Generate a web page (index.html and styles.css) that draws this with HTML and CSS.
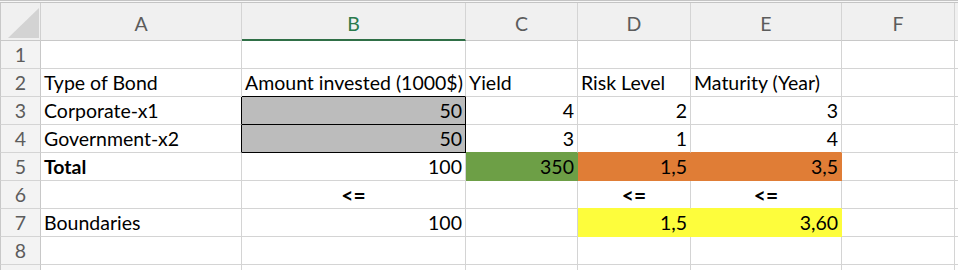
FILE: index.html
```html
<!DOCTYPE html>
<html lang="en">
<head>
<meta charset="utf-8">
<title>Bond portfolio</title>
<link rel="stylesheet" href="styles.css">
</head>
<body>
<div class="frame"></div>
<div class="sheet">
  <!-- column headers -->
  <div class="corner">
    <svg width="41" height="38" viewBox="0 0 41 38"><polygon points="7,35 38,35 38,5" fill="#d3d3d3"/></svg>
  </div>
  <div class="hd">A</div>
  <div class="hd sel">B</div>
  <div class="hd">C</div>
  <div class="hd">D</div>
  <div class="hd">E</div>
  <div class="hd">F</div>
  <div class="hd end"></div>

  <!-- row 1 -->
  <div class="rh">1</div>
  <div class="c"></div><div class="c"></div><div class="c"></div><div class="c"></div><div class="c"></div><div class="c"></div><div class="c end"></div>

  <!-- row 2 -->
  <div class="rh">2</div>
  <div class="c">Type of Bond</div>
  <div class="c box-top">Amount invested (1000$)</div>
  <div class="c">Yield</div>
  <div class="c">Risk Level</div>
  <div class="c">Maturity (Year)</div>
  <div class="c"></div><div class="c end"></div>

  <!-- row 3 -->
  <div class="rh">3</div>
  <div class="c box-left">Corporate-x1</div>
  <div class="c num input">50</div>
  <div class="c num">4</div>
  <div class="c num">2</div>
  <div class="c num">3</div>
  <div class="c"></div><div class="c end"></div>

  <!-- row 4 -->
  <div class="rh">4</div>
  <div class="c box-left">Government-x2</div>
  <div class="c num input">50</div>
  <div class="c num green-top">3</div>
  <div class="c num orange-top">1</div>
  <div class="c num orange-top">4</div>
  <div class="c"></div><div class="c end"></div>

  <!-- row 5 -->
  <div class="rh">5</div>
  <div class="c bold">Total</div>
  <div class="c num">100</div>
  <div class="c num fill-green">350</div>
  <div class="c num fill-orange">1,5</div>
  <div class="c num fill-orange">3,5</div>
  <div class="c"></div><div class="c end"></div>

  <!-- row 6 -->
  <div class="rh">6</div>
  <div class="c"></div>
  <div class="c ctr bold op">&lt;=</div>
  <div class="c"></div>
  <div class="c ctr bold op yellow-top">&lt;=</div>
  <div class="c ctr bold op yellow-top">&lt;=</div>
  <div class="c"></div><div class="c end"></div>

  <!-- row 7 -->
  <div class="rh">7</div>
  <div class="c">Boundaries</div>
  <div class="c num">100</div>
  <div class="c"></div>
  <div class="c num fill-yellow">1,5</div>
  <div class="c num fill-yellow">3,60</div>
  <div class="c"></div><div class="c end"></div>

  <!-- row 8 -->
  <div class="rh">8</div>
  <div class="c"></div><div class="c"></div><div class="c"></div><div class="c"></div><div class="c"></div><div class="c"></div><div class="c end"></div>

  <!-- row 9, only its top edge is in view -->
  <div class="rh"></div>
  <div class="c"></div><div class="c"></div><div class="c"></div><div class="c"></div><div class="c"></div><div class="c"></div><div class="c end"></div>
</div>
</body>
</html>
```

FILE: styles.css
```css
* { box-sizing: border-box; }

html, body {
  margin: 0;
  padding: 0;
  background: #ffffff;
  overflow: hidden;
}

body {
  width: 958px;
  height: 270px;
  font-family: "Lato", "Liberation Sans", sans-serif;
  font-size: 19.5px;
  color: #000;
}

/* window edge above the column headers */
.frame {
  height: 3px;
  border-top: 1px solid #c4c4c4;
  border-bottom: 1px solid #c4c4c4;
  background: #f7f7f7;
}

.sheet {
  display: grid;
  grid-template-columns: 41px 201px 224px 112px 113px 151px 113px 1fr;
  grid-template-rows: 38px repeat(8, 28px) 6px;
  overflow: hidden;
}

/* headers */
.corner {
  background: #f0f0f0;
  border-left: 1px solid #c8c8c8;
  border-right: 1px solid #d0d0d0;
  border-bottom: 1px solid #c8c8c8;
}
.corner svg { display: block; }

.hd {
  background: #f0f0f0;
  color: #5c5c5c;
  border-right: 1px solid #d4d4d4;
  border-bottom: 1px solid #c8c8c8;
  display: flex;
  align-items: flex-end;
  justify-content: center;
  padding-bottom: 6px;
  line-height: 20px;
}
.hd.sel {
  color: #2a7a4c;
  border-bottom: 2px solid #2f6f46;
  padding-bottom: 5px;
}
.hd.end { border-right: none; }

.rh {
  background: #f3f3f3;
  color: #5c5c5c;
  border-left: 1px solid #c8c8c8;
  border-right: 1px solid #c8c8c8;
  border-bottom: 1px solid #d4d4d4;
  display: flex;
  align-items: flex-end;
  justify-content: center;
  padding-bottom: 2px;
  line-height: 22px;
}

/* cells */
.c {
  border-right: 1px solid #d4d4d4;
  border-bottom: 1px solid #d4d4d4;
  display: flex;
  align-items: flex-end;
  padding: 0 3px 2px 3px;
  line-height: 22px;
  white-space: nowrap;
}
.c.end { border-right: none; }

.num { justify-content: flex-end; }
.ctr { justify-content: center; }
.bold { font-weight: 700; }
.op { font-size: 21px; }

/* input range B3:B4 */
.input {
  background: #bcbcbc;
  border-right-color: #000;
  border-bottom-color: #000;
}
.box-top { border-bottom-color: #000; }
.box-left { border-right-color: #000; }

/* result fills */
.fill-green {
  background: #6d9f46;
  border-right-color: #6d9f46;
  border-bottom-color: #6d9f46;
}
.fill-orange {
  background: #e07d36;
  border-right-color: #e07d36;
  border-bottom-color: #e07d36;
}
.fill-yellow {
  background: #fdfd3c;
  border-right-color: #fdfd3c;
  border-bottom-color: #fdfd3c;
}
.green-top { border-bottom-color: #6d9f46; }
.orange-top { border-bottom-color: #e07d36; }
.yellow-top { border-bottom-color: #fdfd3c; }
```
